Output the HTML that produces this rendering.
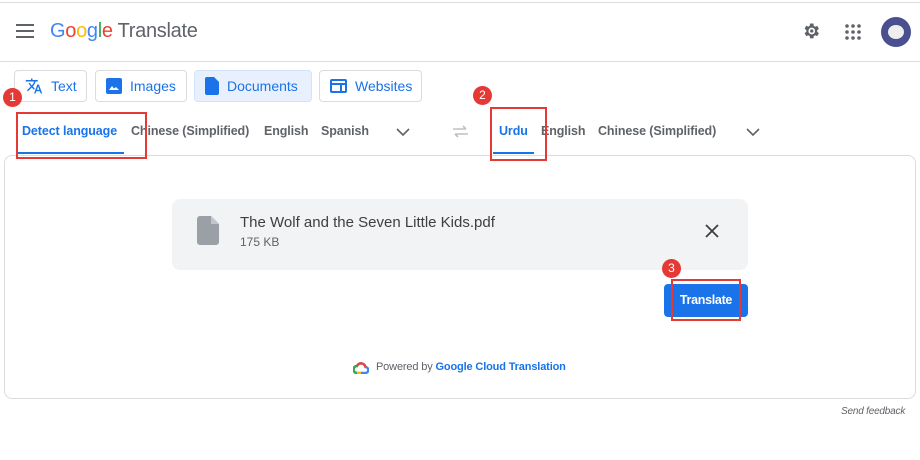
<!DOCTYPE html>
<html><head><meta charset="utf-8"><style>
*{box-sizing:border-box;margin:0;padding:0}
body{width:920px;height:460px;background:#fff;font-family:"Liberation Sans",Arial,sans-serif;position:relative;overflow:hidden;color:#3c4043}
.a{position:absolute}
.tab{position:absolute;top:70px;height:32px;border:1px solid #dadce0;border-radius:4px;display:flex;align-items:center;padding-left:10px;font-size:14px;color:#1a73e8}
.tab svg{margin-right:8px}
.lang{position:absolute;top:124px;font-size:12.5px;font-weight:bold;color:#5f6368;letter-spacing:-0.1px}
.red{position:absolute;border:2px solid #e53935}
.badge{position:absolute;width:19px;height:19px;border-radius:50%;background:#e53935;color:#fff;font-size:12px;text-align:center;line-height:19px}
</style></head><body>
<div class="a" style="left:0;top:2px;width:920px;height:1px;background:#dadce0"></div>
<div class="a" style="left:0;top:61px;width:920px;height:1px;background:#dadce0"></div>
<svg class="a" style="left:16px;top:24px" width="18" height="14"><rect y="0" width="18" height="2" fill="#5f6368"/><rect y="6" width="18" height="2" fill="#5f6368"/><rect y="12" width="18" height="2" fill="#5f6368"/></svg>
<div class="a" style="left:50px;top:20px;font-size:20px;letter-spacing:-0.3px"><span style="color:#4285f4">G</span><span style="color:#ea4335">o</span><span style="color:#fbbc05">o</span><span style="color:#4285f4">g</span><span style="color:#34a853">l</span><span style="color:#ea4335">e</span><span style="color:#5f6368"> Translate</span></div>
<svg class="a" style="left:801px;top:21px" width="20" height="20" viewBox="0 0 24 24"><path fill="#5f6368" d="M19.4 13a7.5 7.5 0 000-2l2.1-1.6-2-3.5-2.5 1a7.3 7.3 0 00-1.7-1L14.9 3h-4l-.4 2.7a7.3 7.3 0 00-1.7 1l-2.5-1-2 3.5L6.4 11a7.5 7.5 0 000 2l-2.1 1.6 2 3.5 2.5-1c.5.4 1.1.7 1.7 1l.4 2.7h4l.4-2.7c.6-.3 1.2-.6 1.7-1l2.5 1 2-3.5zM12.9 16a4 4 0 110-8 4 4 0 010 8zm0-6a2 2 0 100 4 2 2 0 000-4z"/></svg>
<svg class="a" style="left:845px;top:24px" width="16" height="16"><g fill="#5f6368"><circle cx="2" cy="2" r="1.8"/><circle cx="8" cy="2" r="1.8"/><circle cx="14" cy="2" r="1.8"/><circle cx="2" cy="8" r="1.8"/><circle cx="8" cy="8" r="1.8"/><circle cx="14" cy="8" r="1.8"/><circle cx="2" cy="14" r="1.8"/><circle cx="8" cy="14" r="1.8"/><circle cx="14" cy="14" r="1.8"/></g></svg>
<div class="a" style="left:881px;top:17px;width:30px;height:30px;border-radius:50%;background:#4a4f8f"><div class="a" style="left:7px;top:8px;width:16px;height:14px;border-radius:50%;background:#eee"></div></div>

<div class="tab" style="left:14px;width:73px"><svg width="18" height="18" viewBox="0 0 24 24"><path fill="#1a73e8" d="M12.9 15.1l-2.5-2.5c1.7-1.9 3-4.2 3.7-6.6H17V4h-7V2H8v2H1v2h11.2c-.7 1.9-1.7 3.7-3.2 5.3-1-1.1-1.8-2.3-2.3-3.3h-2c.7 1.6 1.7 3.2 3 4.6l-5.1 5L4 19l5-5 3.1 3.1.8-2zM18.5 10h-2L12 22h2l1.1-3h4.8l1.1 3h2l-4.5-12zm-2.6 7l1.6-4.3 1.6 4.3h-3.2z"/></svg>Text</div>
<div class="tab" style="left:95px;width:92px"><svg width="16" height="16" viewBox="0 0 16 16"><rect width="16" height="16" rx="2" fill="#1a73e8"/><path d="M3 12l3-4 2 2.5 2-1.5 3 3z" fill="#fff"/></svg>Images</div>
<div class="tab" style="left:194px;width:118px;background:#e8f0fe;border-color:#d2e3fc"><svg width="14" height="18" viewBox="0 0 14 18"><path d="M2 0h7l5 5v11a2 2 0 01-2 2H2a2 2 0 01-2-2V2a2 2 0 012-2z" fill="#1a73e8"/></svg>Documents</div>
<div class="tab" style="left:319px;width:103px"><svg width="17" height="14" viewBox="0 0 17 14"><rect x="1" y="1" width="15" height="12" rx="1" fill="none" stroke="#1a73e8" stroke-width="2"/><rect x="1" y="4" width="15" height="2" fill="#1a73e8"/><rect x="10" y="6" width="2" height="7" fill="#1a73e8"/></svg>Websites</div>

<div class="lang" style="left:22px;color:#1a73e8">Detect language</div>
<div class="a" style="left:17px;top:152px;width:107px;height:2px;background:#1a73e8"></div>
<div class="lang" style="left:131px">Chinese (Simplified)</div>
<div class="lang" style="left:264px">English</div>
<div class="lang" style="left:321px">Spanish</div>
<svg class="a" style="left:396px;top:128px" width="14" height="9"><path d="M1 1l6 6 6-6" fill="none" stroke="#5f6368" stroke-width="1.6"/></svg>
<svg class="a" style="left:452px;top:125px" width="17" height="13"><path d="M1 4h13M11 1l3 3M16 9H3M6 12l-3-3" fill="none" stroke="#bdc1c6" stroke-width="1.6"/></svg>
<div class="lang" style="left:499px;color:#1a73e8">Urdu</div>
<div class="a" style="left:493px;top:152px;width:41px;height:2px;background:#1a73e8"></div>
<div class="lang" style="left:541px">English</div>
<div class="lang" style="left:598px">Chinese (Simplified)</div>
<svg class="a" style="left:746px;top:128px" width="14" height="9"><path d="M1 1l6 6 6-6" fill="none" stroke="#5f6368" stroke-width="1.6"/></svg>

<div class="a" style="left:4px;top:155px;width:912px;height:244px;border:1px solid #dadce0;border-radius:8px"></div>
<div class="a" style="left:172px;top:199px;width:576px;height:71px;background:#f1f3f4;border-radius:8px"></div>
<svg class="a" style="left:197px;top:216px" width="22" height="29" viewBox="0 0 22 29"><path d="M3 0h11l8 8v18a3 3 0 01-3 3H3a3 3 0 01-3-3V3a3 3 0 013-3z" fill="#9aa0a6"/><path d="M14 0v8h8" fill="#c4c7ca"/></svg>
<div class="a" style="left:240px;top:214px;font-size:15px;color:#3c4043">The Wolf and the Seven Little Kids.pdf</div>
<div class="a" style="left:240px;top:235px;font-size:12px;color:#5f6368">175 KB</div>
<svg class="a" style="left:705px;top:224px" width="14" height="14"><path d="M1 1l12 12M13 1L1 13" stroke="#3c4043" stroke-width="1.8"/></svg>
<div class="a" style="left:664px;top:284px;width:84px;height:33px;background:#1a73e8;border-radius:4px;color:#fff;font-size:12.5px;font-weight:bold;text-align:center;line-height:33px;letter-spacing:-0.3px">Translate</div>
<svg class="a" style="left:353px;top:361px" width="16" height="13" viewBox="0 0 16 13"><path d="M4 12a3.5 3.5 0 010-7 4.5 4.5 0 018.5 1A3 3 0 0112 12z" fill="none" stroke-width="2.4" stroke="#4285f4"/><path d="M4 12a3.5 3.5 0 010-7" fill="none" stroke-width="2.4" stroke="#34a853"/><path d="M4 5a4.5 4.5 0 018.5 1" fill="none" stroke-width="2.4" stroke="#ea4335"/><path d="M4 12h4" stroke-width="2.4" stroke="#fbbc05"/></svg>
<div class="a" style="left:376px;top:361px;font-size:11px;color:#5f6368;letter-spacing:-0.15px">Powered by <span style="color:#1a73e8;font-weight:bold">Google Cloud Translation</span></div>
<div class="a" style="left:841px;top:406px;font-size:10px;font-style:italic;color:#5f6368;letter-spacing:-0.2px">Send feedback</div>

<div class="red" style="left:16px;top:112px;width:131px;height:47px"></div>
<div class="red" style="left:490px;top:107px;width:57px;height:54px"></div>
<div class="red" style="left:671px;top:279px;width:70px;height:42px"></div>
<div class="badge" style="left:3px;top:88px">1</div>
<div class="badge" style="left:473px;top:86px">2</div>
<div class="badge" style="left:662px;top:259px">3</div>
</body></html>
